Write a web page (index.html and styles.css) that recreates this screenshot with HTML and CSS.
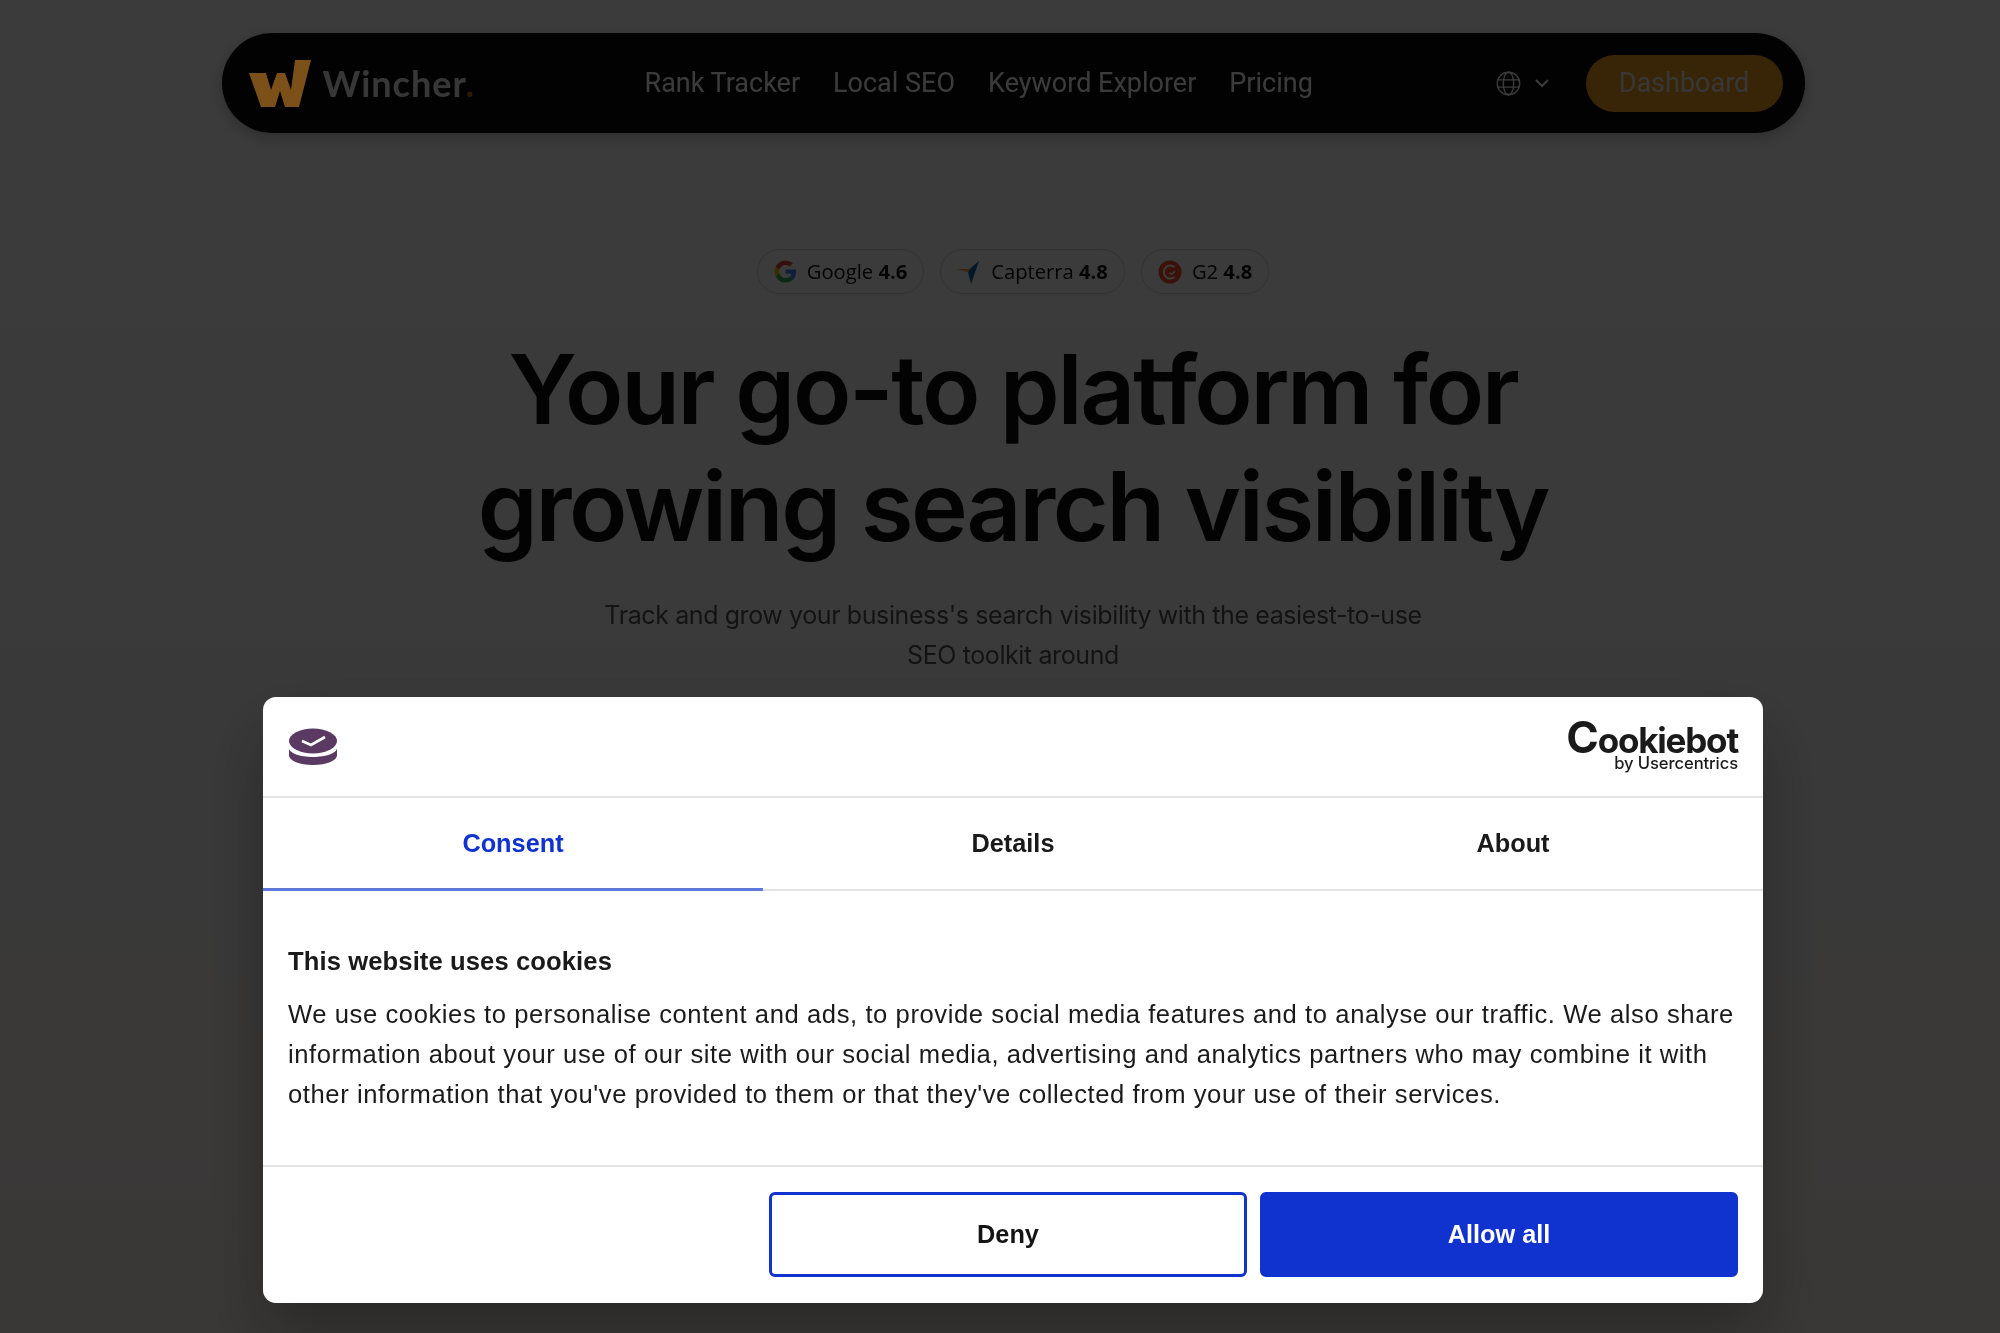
FILE: index.html
```html
<!DOCTYPE html>
<html lang="en">
<head>
    <meta charset="UTF-8">
    <meta name="viewport" content="width=device-width, initial-scale=1.0">
    <title>Wincher</title>
    <link rel="stylesheet" href="styles.css">
</head>
<body>
    <div class="page">
        <header class="nav">
            <a class="brand">
                <svg class="brand-mark" viewBox="0 0 62 47" width="62" height="47">
                    <path fill="#7c5119" d="M0 13h17l5 17 6-17h8l6 17 4-30h16L50 47H36l-5-16-5 16H12z"/>
                </svg>
                <span class="brand-name">Wincher<span class="brand-dot">.</span></span>
            </a>
            <nav class="nav-links">
                <a>Rank Tracker</a>
                <a>Local SEO</a>
                <a>Keyword Explorer</a>
                <a>Pricing</a>
            </nav>
            <div class="nav-right">
                <button class="lang">
                    <svg viewBox="0 0 24 24" width="25" height="25" fill="none" stroke="#fff" stroke-width="1.3">
                        <circle cx="12" cy="12" r="10.8"/>
                        <ellipse cx="12" cy="12" rx="5" ry="10.8"/>
                        <path d="M1.5 8.5h21M1.5 15.5h21"/>
                    </svg>
                    <svg viewBox="0 0 16 10" width="16" height="10" fill="none" stroke="#fff" stroke-width="2">
                        <path d="M2 2l6 6 6-6"/>
                    </svg>
                </button>
                <a class="dashboard">Dashboard</a>
            </div>
        </header>

        <main class="hero">
            <div class="ratings">
                <span class="chip">
                    <svg viewBox="0 0 24 24" width="23" height="23">
                        <path fill="#4285f4" d="M23 12.300c0-.8-.1-1.600-.2-2.300H12v4.400h6.200a5.300 5.300 0 0 1-2.300 3.500v2.900h3.700c2.200-2 3.400-5 3.400-8.500z"/>
                        <path fill="#34a853" d="M12 23.500c3.100 0 5.700-1 7.600-2.800l-3.700-2.900c-1 .7-2.300 1.100-3.900 1.100-3 0-5.500-2-6.400-4.700H1.800v3A11.500 11.500 0 0 0 12 23.500z"/>
                        <path fill="#fbbc05" d="M5.600 14.200a7 7 0 0 1 0-4.400v-3H1.800a11.500 11.500 0 0 0 0 10.400z"/>
                        <path fill="#ea4335" d="M12 5.100c1.700 0 3.200.6 4.400 1.700l3.300-3.300A11.500 11.500 0 0 0 1.800 6.800l3.800 3c.9-2.700 3.400-4.700 6.400-4.700z"/>
                    </svg>
                    <span class="chip-text">Google <b>4.6</b></span>
                </span>
                <span class="chip">
                    <svg viewBox="0 0 24 24" width="24" height="24">
                        <path fill="#ff9d28" d="M0 9h11l3-1-3 4z"/>
                        <path fill="#68c5ed" d="M14 8l8-7-8 11z"/>
                        <path fill="#0a6ab0" d="M14 8l8-7-8 23-3-12z"/>
                    </svg>
                    <span class="chip-text">Capterra <b>4.8</b></span>
                </span>
                <span class="chip">
                    <svg viewBox="0 0 24 24" width="24" height="24">
                        <circle cx="12" cy="12" r="11.500" fill="#ff492c"/>
                        <path d="M16.500 17a6.500 6.500 0 1 1 0-10" fill="none" stroke="#fff" stroke-width="2"/>
                        <path d="M11 13l3 1 3-3" fill="none" stroke="#fff" stroke-width="1.600"/>
                    </svg>
                    <span class="chip-text">G2 <b>4.8</b></span>
                </span>
            </div>
            <h1 class="headline">Your go-to platform for<br>growing search visibility</h1>
            <p class="lead">Track and grow your business's search visibility with the easiest-to-use<br>SEO toolkit around</p>
            <div class="preview"></div>
        </main>
    </div>

    <div class="overlay">
        <section class="dialog">
            <div class="dialog-top">
                <svg class="site-logo" viewBox="0 0 50 38" width="50" height="38">
                    <path fill="#5a3a63" d="M1 20v7c0 6 11 10 24 10s24-4 24-10v-7c0 5-11 9-24 9S1 25 1 20z"/>
                    <ellipse fill="#5a3a63" cx="25" cy="13" rx="24" ry="12.500"/>
                    <path fill="none" stroke="#fff" stroke-width="2.600" d="M14 13l9 4 14-8"/>
                </svg>
                <div class="cookiebot">
                    <span class="cookiebot-name"><span class="cookiebot-c">C</span>ookiebot</span>
                    <span class="cookiebot-by">by Usercentrics</span>
                </div>
            </div>
            <div class="tabs">
                <a class="tab active">Consent</a>
                <a class="tab">Details</a>
                <a class="tab">About</a>
            </div>
            <div class="dialog-body">
                <h2>This website uses cookies</h2>
                <p>We use cookies to personalise content and ads, to provide social media features and to analyse our traffic. We also share information about your use of our site with our social media, advertising and analytics partners who may combine it with other information that you've provided to them or that they've collected from your use of their services.</p>
            </div>
            <div class="dialog-actions">
                <button class="btn btn-deny">Deny</button>
                <button class="btn btn-allow">Allow all</button>
            </div>
        </section>
    </div>
</body>
</html>
```
FILE: styles.css
```css
* {
    box-sizing: border-box;
}

body {
    margin: 0;
    height: 1333px;
    overflow: hidden;
    background: linear-gradient(180deg, #fff 0%, #f6f6f6 60%, #fbf2ec 100%);
    font-family: Inter, sans-serif;
    color: #111;
}

.page {
    padding-left: 26px;
}

.nav {
    width: 1583px;
    height: 100px;
    margin: 33px auto 0;
    padding: 0 22px 0 27px;
    display: flex;
    align-items: center;
    background: #0a0a0a;
    border-radius: 50px;
    box-shadow: 0 4px 14px rgba(0, 0, 0, 0.25);
}

.brand {
    display: flex;
    align-items: center;
    gap: 12px;
    width: 396px;
}

/* the mark stays brighter than the dimmed page in the screenshot */
.brand-mark {
    position: relative;
    z-index: 20;
    filter: blur(0.7px);
}

.brand-name,
.nav-links,
.nav-right,
.hero {
    filter: blur(0.7px);
}

.brand-name {
    font-family: Lato, sans-serif;
    font-weight: 700;
    font-size: 36px;
    letter-spacing: 1px;
    color: #eee;
}

.brand-dot {
    color: #a87020;
}

.nav-links {
    display: flex;
    gap: 33px;
    font-family: Roboto, sans-serif;
    font-size: 27px;
    color: #fff;
}

.nav-right {
    margin-left: auto;
    display: flex;
    align-items: center;
    gap: 36px;
}

.lang {
    display: flex;
    align-items: center;
    gap: 13px;
    padding: 0;
    background: none;
    border: none;
}

.dashboard {
    width: 197px;
    height: 57px;
    display: flex;
    align-items: center;
    justify-content: center;
    background: #f29b21;
    border-radius: 29px;
    font-family: Roboto, sans-serif;
    font-size: 27px;
    color: #eee;
}

.hero {
    padding-top: 116px;
    display: flex;
    flex-direction: column;
    align-items: center;
}

.ratings {
    display: flex;
    gap: 16px;
}

.chip {
    height: 45px;
    padding: 0 16px;
    display: flex;
    align-items: center;
    gap: 10px;
    border: 1px solid #d8d8d8;
    border-radius: 23px;
    font-family: "Open Sans", sans-serif;
    font-size: 20.200px;
}

.chip-text {
    padding-bottom: 2px;
}

.chip b {
    font-weight: 700;
}

.headline {
    margin: 37px 0 0;
    font-size: 96px;
    font-weight: 600;
    line-height: 117px;
    letter-spacing: -2.350px;
    text-align: center;
}

.lead {
    margin: 30px 0 0;
    font-size: 25px;
    line-height: 40px;
    letter-spacing: -0.4px;
    color: #555;
    text-align: center;
}

.preview {
    width: 1264px;
    height: 500px;
    margin-top: 60px;
    background: #d6d2ce;
}

.overlay {
    position: fixed;
    inset: 0;
    z-index: 10;
    display: flex;
    justify-content: center;
    align-items: flex-start;
    padding: 697px 0 0 26px;
    background: rgba(0, 0, 0, 0.77);
}

.dialog {
    width: 1500px;
    height: 606px;
    display: flex;
    flex-direction: column;
    background: #fff;
    border-radius: 13px;
    box-shadow: 0 32px 68px rgba(0, 0, 0, 0.3);
    font-family: "Liberation Sans", Arial, sans-serif;
    color: #1a1a1a;
}

.dialog-top {
    height: 101px;
    padding: 0 25px;
    display: flex;
    align-items: center;
    justify-content: space-between;
    border-bottom: 2px solid #e3e3e3;
}

.cookiebot {
    display: flex;
    flex-direction: column;
    align-items: flex-end;
    margin-top: -1px;
}

.cookiebot-name {
    font-family: Inter, sans-serif;
    font-weight: 700;
    font-size: 35px;
    line-height: 32px;
    letter-spacing: -1.200px;
}

.cookiebot-c {
    font-size: 44px;
    line-height: 32px;
}

.cookiebot-by {
    font-family: Inter, sans-serif;
    font-weight: 500;
    font-size: 16.600px;
    line-height: 18px;
    letter-spacing: -0.1px;
    margin-top: -2px;
}

.tabs {
    height: 93px;
    display: flex;
    border-bottom: 2px solid #e3e3e3;
}

.tab {
    flex: 1;
    display: flex;
    align-items: center;
    justify-content: center;
    padding-bottom: 3px;
    font-size: 25.300px;
    font-weight: 700;
    margin-bottom: -2px;
}

.tab.active {
    padding-bottom: 0;
    color: #1032cf;
    border-bottom: 3px solid #5f78dc;
}

.dialog-body {
    flex: 1;
    padding: 54px 25px 0;
    border-bottom: 2px solid #e3e3e3;
}

.dialog-body h2 {
    margin: 0 0 17px;
    font-size: 25.600px;
    line-height: 32px;
    font-weight: 700;
    letter-spacing: 0.1px;
}

.dialog-body p {
    margin: 0;
    font-size: 25.600px;
    line-height: 40px;
    letter-spacing: 0.58px;
}

.dialog-actions {
    height: 136px;
    padding: 0 25px 2px 506px;
    display: flex;
    align-items: center;
    gap: 13px;
}

.btn {
    flex: 1;
    height: 85px;
    border-radius: 6px;
    border: 3px solid #1032cf;
    font-family: "Liberation Sans", Arial, sans-serif;
    font-size: 25.300px;
    font-weight: 700;
}

.btn-deny {
    background: #fff;
    color: #141414;
}

.btn-allow {
    background: #1032cf;
    color: #fff;
}
```
